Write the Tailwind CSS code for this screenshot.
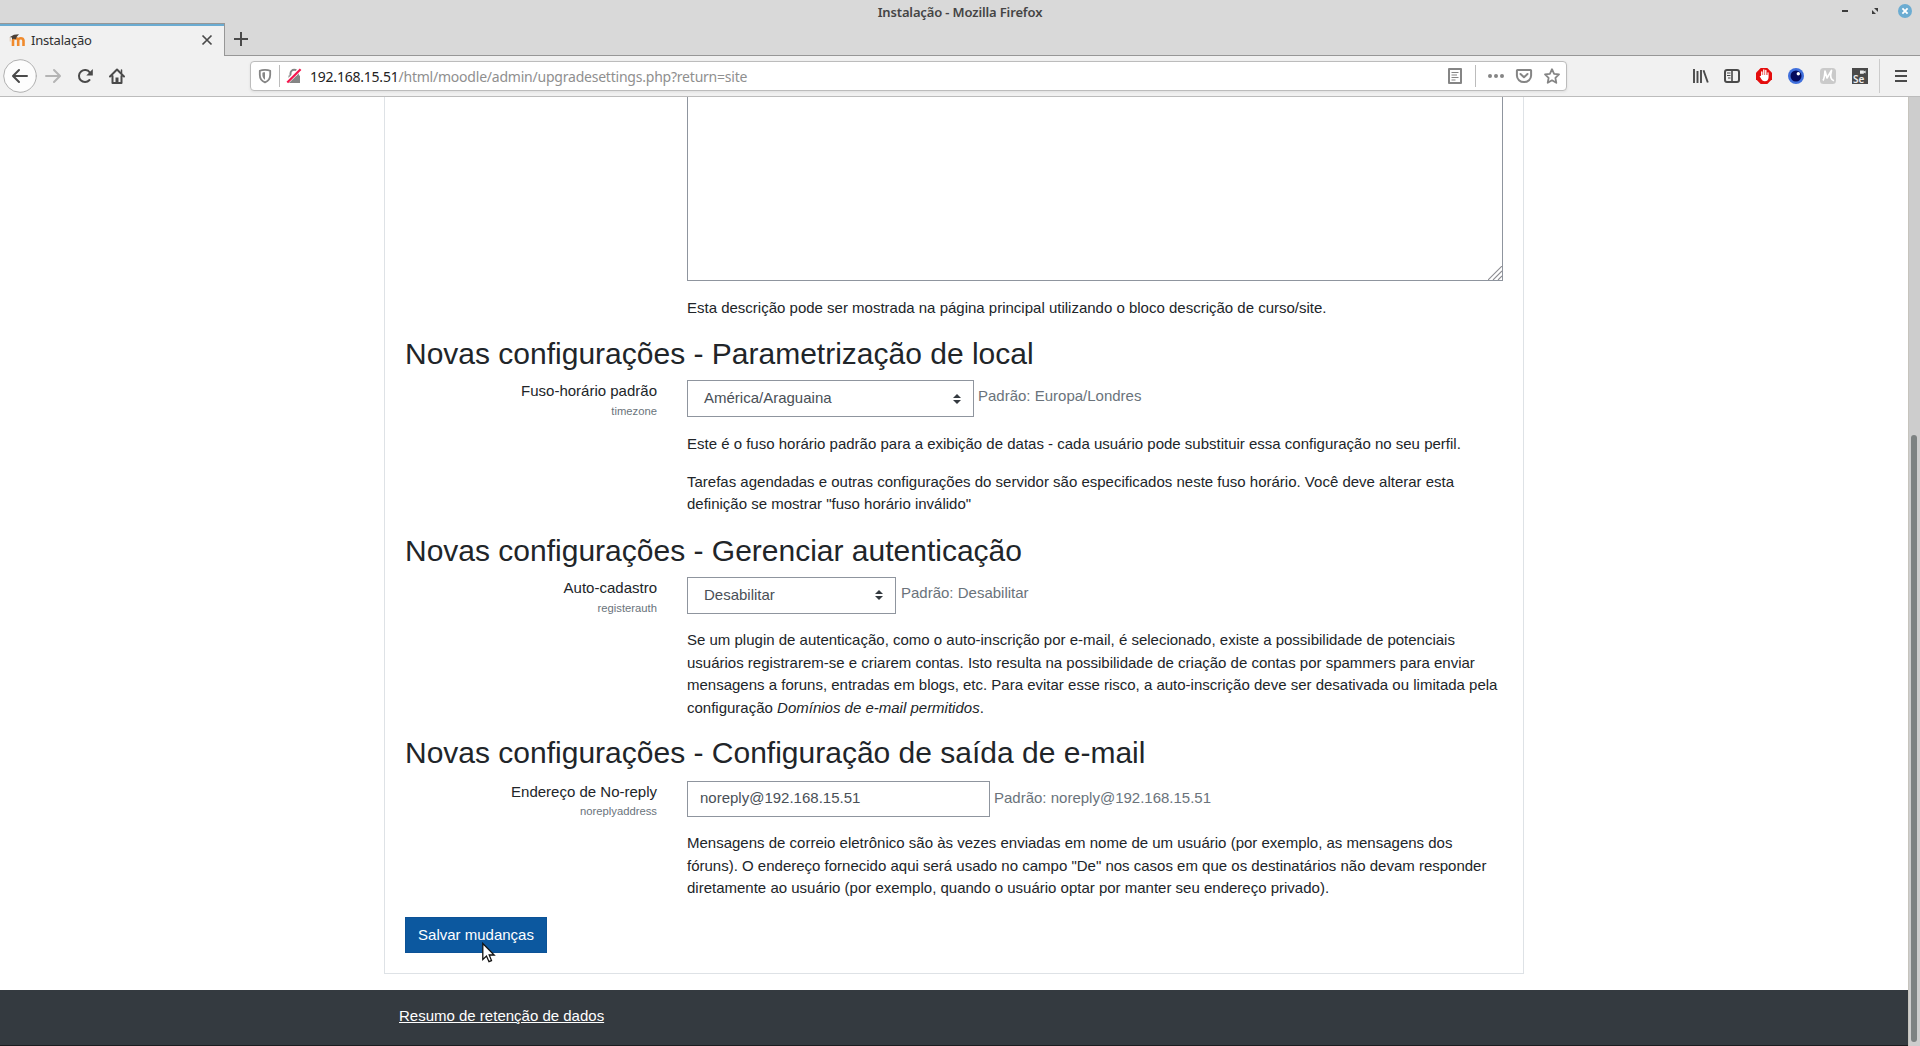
<!DOCTYPE html>
<html lang="pt-BR">
<head>
<meta charset="utf-8">
<title>Instalação</title>
<script src="https://cdn.jsdelivr.net/npm/@tailwindcss/browser@4"></script>
</head>
<body class="flex h-[1046px] w-[1920px] flex-col overflow-hidden bg-white font-['Liberation_Sans',Arial,sans-serif] text-[15px] leading-[22.5px] text-[#212529]">

<!-- Title bar -->
<header class="relative flex h-[23px] shrink-0 items-center justify-center bg-[#d9d9d9] font-['Noto_Sans',sans-serif]">
  <span class="pt-px text-[13px] leading-[23px] font-semibold tracking-[-0.14px] whitespace-nowrap text-[#454545]">Instalação - Mozilla Firefox</span>
  <svg class="absolute top-0 right-0 h-[23px] w-[90px]" viewBox="1830 0 90 23" fill="none">
    <path d="M1842 11h6" stroke="#3c3c3c" stroke-width="2"/>
    <path d="M1874 8h4v4zM1872 10v4h4z" fill="#3c3c3c"/>
    <circle cx="1905" cy="11" r="7" fill="#6bacd2"/>
    <path d="M1902.400 8.400l5.200 5.200M1907.600 8.400l-5.200 5.200" stroke="#fff" stroke-width="1.800"/>
  </svg>
</header>

<!-- Tabs -->
<div class="flex h-[33px] shrink-0 bg-[#d9d9d9] font-['Noto_Sans',sans-serif]">
  <div class="flex w-[225px] items-center border-t border-r border-[#979797] bg-[#f1f1f1] shadow-[inset_0_2px_0_#6bacd2]">
    <svg class="ml-[9px] h-4 w-4 shrink-0" viewBox="0 0 16 16" fill="none">
      <path d="M4 14V8.500Q4.200 6.200 6.700 6.200T9.200 8.500V14M9.200 8.500Q9.400 6.200 11.800 6.200T14.500 8.500V14" stroke="#f08a2c" stroke-width="2.600"/>
      <path d="M.5 5.200L5 2.800l5-.6-2.200 2.600-1 2.600Q5 6.200 3 7.400L3 5.600z" fill="#4a4038"/>
      <path d="M1.200 5.500v4" stroke="#e3c9ae"/>
    </svg>
    <span class="ml-[6px] grow text-[13px] leading-[18px] tracking-[-0.2px] whitespace-nowrap text-[#303030]">Instalação</span>
    <svg class="mr-[11px] h-[12px] w-[12px]" viewBox="0 0 12 12"><path d="M1.500 1.500l9 9M10.500 1.500l-9 9" stroke="#4a4a4a" stroke-width="1.700"/></svg>
  </div>
  <div class="flex grow border-b border-[#979797]">
    <svg class="mt-[9px] ml-[9px] h-[14px] w-[14px]" viewBox="0 0 14 14"><path d="M7 0v14M0 7h14" stroke="#4a4a4a" stroke-width="2"/></svg>
  </div>
</div>

<!-- Navigation toolbar -->
<div class="flex h-[41px] shrink-0 items-center border-b border-[#bcbcbc] bg-[#f1f1f1] font-['Noto_Sans',sans-serif]">
  <svg class="h-[40px] w-[130px] shrink-0" viewBox="0 56 130 40" fill="none" stroke="#4a4a4a" stroke-width="2" stroke-linecap="round" stroke-linejoin="round">
    <circle cx="20" cy="76" r="16.300" fill="#fdfdfd" stroke="#b0b0b0" stroke-width="1"/>
    <path d="M27 76H13.500M19 70l-6 6 6 6"/>
    <path d="M46 76h13.500M54 70l6 6-6 6" stroke="#b4b4b4"/>
    <path d="M89.500 80a6 6 0 1 1 .3-7.500" />
    <path d="M92.800 69v6.500h-6.500z" fill="#4a4a4a" stroke="none"/>
    <path d="M110 76.500l7-7 7 7M112.500 76v7h9v-7"/>
    <path d="M121.500 70v3" stroke-width="1.500"/>
    <path d="M115.500 77.500h3V83h-3z" fill="#4a4a4a" stroke="none"/>
  </svg>
  <div class="ml-[120px] flex h-[30px] w-[1317px] shrink-0 items-center rounded-[4px] border border-[#bcbcbc] bg-white shadow-[0_1px_3px_rgba(0,0,0,.08)]">
    <svg class="h-[28px] w-[59px] shrink-0" viewBox="251 62 59 28" fill="none">
      <path d="M265 69.800c2 0 4 .4 5.200 1v4c0 3.600-2.200 6.400-5.200 7.600-3-1.200-5.200-4-5.200-7.600v-4c1.200-.6 3.200-1 5.200-1z" stroke="#858585" stroke-width="1.800" stroke-linejoin="round"/>
      <path d="M265 72.300v7.400c-1.600-1-2.600-2.700-2.600-4.800v-2.200c.8-.3 1.600-.4 2.600-.4z" fill="#858585"/>
      <path d="M279.500 65v22" stroke="#bcbcbc"/>
      <path d="M290.500 76v-2.500a3.700 3.700 0 0 1 7.400 0V76" stroke="#858585" stroke-width="2"/>
      <path d="M288.500 75.500h11.500V83h-11.500z" fill="#858585"/>
      <path d="M287 82l13.500-13" stroke="#fff" stroke-width="4"/>
      <path d="M287.300 82.500L300.600 69.300" stroke="#f4144c" stroke-width="2.200"/>
    </svg>
    <span class="pt-px text-[14px] leading-[20px] tracking-[-0.22px] whitespace-nowrap text-[#8f8f8f]"><span class="text-[#222]">192.168.15.51</span>/html/moodle/admin/upgradesettings.php?return=site</span>
    <svg class="ml-auto h-[28px] w-[126px] shrink-0" viewBox="1440 62 126 28" fill="none" stroke="#858585" stroke-width="2" stroke-linejoin="round">
      <path d="M1449 69h12v14h-12z"/>
      <path d="M1451.500 72.500h7M1451.500 75h5.500M1451.500 77.500h7M1451.500 80h4" stroke-width="1"/>
      <path d="M1475.500 65v22" stroke="#bcbcbc" stroke-width="1"/>
      <g fill="#858585" stroke="none"><circle cx="1490" cy="76" r="2"/><circle cx="1496" cy="76" r="2"/><circle cx="1502" cy="76" r="2"/></g>
      <path d="M1517.500 70h13q.6 0 .6.600V75.500a7.100 6.600 0 0 1-14.200 0v-4.900q0-.6.6-.6z"/>
      <path d="M1520.500 74l3.500 3.300 3.500-3.300" stroke-linecap="round"/>
      <path d="M1552 69.200l2.100 4.600 4.900.6-3.600 3.400.9 5-4.300-2.500-4.300 2.500.9-5-3.600-3.400 4.900-.6z" stroke-width="1.800"/>
    </svg>
  </div>
  <svg class="ml-auto h-[40px] w-[240px] shrink-0" viewBox="1680 56 240 40" fill="none" stroke="#4a4a4a" stroke-width="2">
    <path d="M1694 69v14M1697.500 71v12M1701 70v13M1703.500 70.200l4.300 12.300" stroke-width="1.900"/>
    <rect x="1725" y="70" width="14" height="12" rx="2"/>
    <path d="M1732 70v12" stroke-width="1.600"/><path d="M1727 73h3.500M1727 75.500h3.500M1728 78h2.500" stroke-width="1"/>
    <path d="M1760.700 68h6.600l4.700 4.700v6.600l-4.700 4.700h-6.600l-4.700-4.700v-6.600z" fill="#e40d0d" stroke="none"/>
    <path d="M1761.800 77v-5M1763.800 76v-6M1765.800 76v-5.500" stroke="#fff" stroke-width="1.400" stroke-linecap="round"/>
    <path d="M1761.100 75h6.300v-2.500q1.200-.6 1.200.5V77q0 4.200-3.800 4.200-2.400 0-3.400-2l-1.800-3q.6-1 1.500 0z" fill="#fff" stroke="none"/>
    <circle cx="1796" cy="76" r="8" fill="#3f6fdc" stroke="none"/><circle cx="1796" cy="76" r="5.500" fill="#04095c" stroke="none"/><circle cx="1798.300" cy="73.700" r="1.700" fill="#fff" stroke="none"/>
    <rect x="1820" y="68" width="16" height="16" rx="3.500" fill="#cacaca" stroke="none"/>
    <path d="M1822.800 80.500q1.500-1 2.200-9.500l2 7 4.500-7.500q-2.500 9 2.500 10.300" stroke="#fff" stroke-width="1.700" stroke-linejoin="round"/>
    <path d="M1852 68h16v16h-16z" fill="#4a4a4a" stroke="none"/>
    <path d="M1860 70.500h3.800v1l1.800-1v3l-1.800-1v1.200H1860z" fill="#eee" stroke="none"/>
    <text x="1853" y="82.500" font-size="10" font-weight="600" fill="#eee" stroke="none">Se</text>
    <path d="M1879.500 59v34" stroke="#ccc" stroke-width="1"/>
    <path d="M1895 71h12M1895 76h12M1895 81h12"/>
  </svg>
</div>

<!-- Page viewport -->
<div class="flex min-h-0 grow">
  <div class="flex w-[1908px] flex-col">
    <main class="ml-[384px] h-[877px] w-[1140px] shrink-0 border border-t-0 border-[#dee2e6] px-5">
      <div class="ml-[282px] w-[816px]">
        <div class="flex h-[184px] items-end justify-end border border-t-0 border-[#8f959e]">
          <svg class="h-[14px] w-[14px]" viewBox="0 0 14 14"><path d="M0 14L14 0M5 14l9-9M10 14l4-4" stroke="#8d8d92" stroke-width="1.100"/></svg>
        </div>
        <p class="mt-[15.500px]">Esta descrição pode ser mostrada na página principal utilizando o bloco descrição de curso/site.</p>
      </div>

      <section class="mt-[17px] h-[196.500px]">
        <h3 class="h-[44px] text-[30px] leading-9">Novas configurações - Parametrização de local</h3>
        <div class="flex gap-[30px]">
          <div class="mt-[-0.500px] w-[252px] text-right">
            <div>Fuso-horário padrão</div>
            <div class="mt-[-2px] text-[11.250px] text-[#6a737b]">timezone</div>
          </div>
          <div class="w-[816px]">
            <div class="flex gap-1">
              <div class="flex h-[37px] w-[287px] items-center justify-between border border-[#8f959e] pr-3 pl-4 text-[#495057]">América/Araguaina
                <svg class="h-[10px] w-[8px]" viewBox="0 0 8 10"><path d="M0 4l4-4 4 4zM0 6l4 4 4-4z" fill="#343a40"/></svg>
              </div>
              <span class="mt-[5px] text-[#6a737b]">Padrão: Europa/Londres</span>
            </div>
            <p class="mt-[15.500px]">Este é o fuso horário padrão para a exibição de datas - cada usuário pode substituir essa configuração no seu perfil.</p>
            <p class="mt-[15.500px]">Tarefas agendadas e outras configurações do servidor são especificados neste fuso horário. Você deve alterar esta definição se mostrar "fuso horário inválido"</p>
          </div>
        </div>
      </section>

      <section class="h-[202.500px]">
        <h3 class="h-[44px] text-[30px] leading-9">Novas configurações - Gerenciar autenticação</h3>
        <div class="flex gap-[30px]">
          <div class="w-[252px] text-right">
            <div>Auto-cadastro</div>
            <div class="mt-[-2px] text-[11.250px] text-[#6a737b]">registerauth</div>
          </div>
          <div class="w-[816px]">
            <div class="flex gap-[5px]">
              <div class="flex h-[37px] w-[209px] items-center justify-between border border-[#8f959e] pr-3 pl-4 text-[#495057]">Desabilitar
                <svg class="h-[10px] w-[8px]" viewBox="0 0 8 10"><path d="M0 4l4-4 4 4zM0 6l4 4 4-4z" fill="#343a40"/></svg>
              </div>
              <span class="mt-[5px] text-[#6a737b]">Padrão: Desabilitar</span>
            </div>
            <p class="mt-[15.750px]">Se um plugin de autenticação, como o auto-inscrição por e-mail, é selecionado, existe a possibilidade de potenciais usuários registrarem-se e criarem contas. Isto resulta na possibilidade de criação de contas por spammers para enviar mensagens a foruns, entradas em blogs, etc. Para evitar esse risco, a auto-inscrição deve ser desativada ou limitada pela configuração <em>Domínios de e-mail permitidos</em>.</p>
          </div>
        </div>
      </section>

      <section class="h-[182px]">
        <h3 class="h-[45.500px] text-[30px] leading-9">Novas configurações - Configuração de saída de e-mail</h3>
        <div class="flex gap-[30px]">
          <div class="w-[252px] text-right">
            <div>Endereço de No-reply</div>
            <div class="mt-[-3px] text-[11.250px] text-[#6a737b]">noreplyaddress</div>
          </div>
          <div class="w-[816px]">
            <div class="flex gap-1">
              <div class="flex h-[36px] w-[303px] items-center border border-[#8f959e] px-3 text-[#495057]">noreply@192.168.15.51</div>
              <span class="mt-[6px] text-[#6a737b]">Padrão: noreply@192.168.15.51</span>
            </div>
            <p class="mt-[15.750px]">Mensagens de correio eletrônico são às vezes enviadas em nome de um usuário (por exemplo, as mensagens dos fóruns). O endereço fornecido aqui será usado no campo "De" nos casos em que os destinatários não devam responder diretamente ao usuário (por exemplo, quando o usuário optar por manter seu endereço privado).</p>
          </div>
        </div>
      </section>

      <button class="relative flex h-9 w-[142px] items-center justify-center border border-[#0c5296] bg-[#0c589f] text-white">Salvar mudanças
        <svg class="absolute top-[24px] left-[76px] h-[22px] w-[14px]" viewBox="0 0 14 22"><path d="M.8 1.500v16l3.700-3.400 2.500 5.600 2.500-1.100L7.200 13h5z" fill="#fff" stroke="#111" stroke-width="1.300"/></svg>
      </button>
    </main>
    <footer class="mt-4 h-[55px] shrink-0 bg-[#343a40] px-[399px] pt-[15px] text-white"><a class="underline" href="#">Resumo de retenção de dados</a></footer>
    <div class="h-px bg-[#1c1d20]"></div>
  </div>
  <div class="relative w-3 border-l border-[#c6c4bd] bg-[#cdcdcd]">
    <div class="absolute top-[338px] left-[2px] h-[607px] w-[6px] rounded-full bg-[#7d8282]"></div>
  </div>
</div>
</body>
</html>
